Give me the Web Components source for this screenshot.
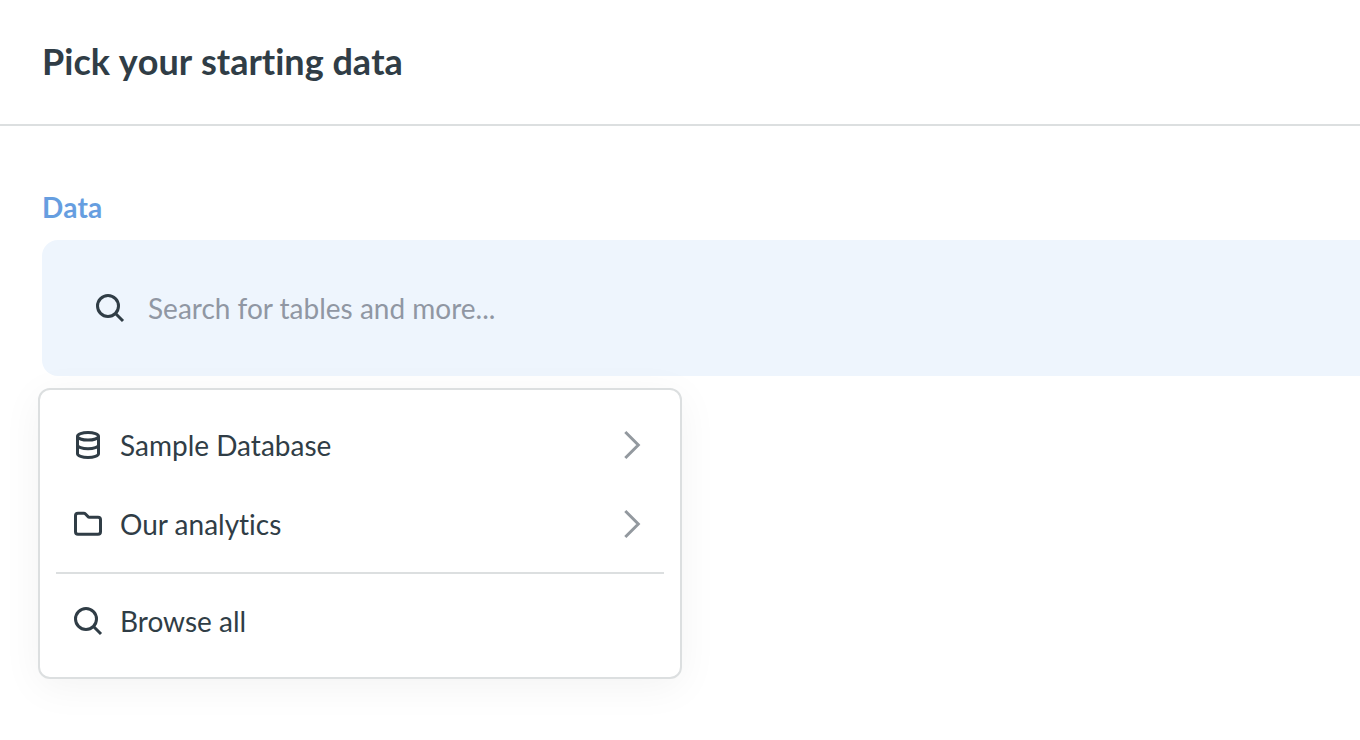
<!DOCTYPE html>
<html lang="en">
<head>
<meta charset="utf-8">
<title>Pick your starting data</title>
<style>
    body {
        margin: 0;
        background: #fff;
        color: #303d46;
        font-family: Lato, "Noto Sans", sans-serif;
        font-size: 28px;
        line-height: 32px;
        font-variant-ligatures: none;
    }
</style>
</head>
<body>
<page-header>Pick your starting data</page-header>
<main>
    <notebook-step label="Data">
        <data-search placeholder="Search for tables and more..."></data-search>
        <data-picker slot="popover">
            <picker-item icon="database" expandable>Sample Database</picker-item>
            <picker-item icon="folder" expandable>Our analytics</picker-item>
            <picker-item slot="footer" icon="search">Browse all</picker-item>
        </data-picker>
    </notebook-step>
</main>

<script>
const ICONS = {
    search: '<circle cx="14" cy="14" r="10.5"/><path d="M21.5 21.5 29 29"/>',
    database: '<ellipse cx="16" cy="7.3" rx="10.5" ry="3.8"/><path d="M5.5 7.3v17.4c0 2.1 4.7 3.8 10.5 3.8s10.5-1.7 10.5-3.8V7.3M5.5 16c0 2.1 4.7 3.8 10.5 3.8s10.5-1.7 10.5-3.8"/>',
    folder: '<path d="M6 5.3h5.8c.8 0 1.2.2 1.7.7l2.4 2.6c.4.5.9.7 1.6.7H26c1.6 0 2.5.9 2.5 2.5v11.9c0 1.6-.9 2.5-2.5 2.5H6c-1.6 0-2.5-.9-2.5-2.5V7.8c0-1.6.9-2.5 2.5-2.5z"/>',
    chevron: '<path d="M9.3 3 22.3 16 9.3 29"/>'
};

class AppIcon extends HTMLElement {
    constructor() {
        super();
        this.attachShadow({ mode: 'open' });
    }

    connectedCallback() {
        this.shadowRoot.innerHTML = `
            <style>
                :host {
                    display: block;
                    flex: none;
                    width: 32px;
                    height: 32px;
                }
                svg {
                    display: block;
                    fill: none;
                    stroke: currentColor;
                    stroke-width: 3;
                }
            </style>
            <svg width="32" height="32" viewBox="0 0 32 32" aria-hidden="true">${ICONS[this.getAttribute('name')]}</svg>
        `;
    }
}

class PageHeader extends HTMLElement {
    constructor() {
        super();
        this.attachShadow({ mode: 'open' });
    }

    connectedCallback() {
        this.shadowRoot.innerHTML = `
            <style>
                :host {
                    display: block;
                    padding: 40px 42px;
                    border-bottom: 2px solid #dcdfe0;
                }
                h1 {
                    margin: 0 0 2px;
                    font-size: 36px;
                    line-height: 42px;
                    font-weight: 700;
                    font-kerning: none;
                }
            </style>
            <h1><slot></slot></h1>
        `;
    }
}

class NotebookStep extends HTMLElement {
    constructor() {
        super();
        this.attachShadow({ mode: 'open' });
    }

    connectedCallback() {
        this.shadowRoot.innerHTML = `
            <style>
                :host {
                    display: block;
                    padding: 65px 0 60px 42px;
                }
                h2 {
                    margin: 0 0 17px;
                    color: #669ee0;
                    font-size: 28px;
                    line-height: 32px;
                    font-weight: 700;
                    font-kerning: none;
                }
                .cell {
                    padding: 52px;
                    border-radius: 16px 0 0 16px;
                    background: #eef5fd;
                }
                .popover {
                    margin: 12px 0 0 -4px;
                }
            </style>
            <h2>${this.getAttribute('label')}</h2>
            <div class="cell"><slot></slot></div>
            <div class="popover"><slot name="popover"></slot></div>
        `;
    }
}

class DataSearch extends HTMLElement {
    constructor() {
        super();
        this.attachShadow({ mode: 'open' });
    }

    connectedCallback() {
        const placeholder = this.getAttribute('placeholder');
        this.shadowRoot.innerHTML = `
            <style>
                :host {
                    display: block;
                }
                label {
                    display: flex;
                    gap: 22px;
                }
                input {
                    flex: 1;
                    min-width: 0;
                    height: 32px;
                    padding: 0;
                    border: 0;
                    outline: 0;
                    background: none;
                    color: inherit;
                    font: inherit;
                }
                input::placeholder {
                    color: #9097a3;
                    opacity: 1;
                }
            </style>
            <label>
                <app-icon name="search"></app-icon>
                <input type="text" placeholder="${placeholder}" aria-label="${placeholder}">
            </label>
        `;
    }
}

class DataPicker extends HTMLElement {
    constructor() {
        super();
        this.attachShadow({ mode: 'open' });
    }

    connectedCallback() {
        this.shadowRoot.innerHTML = `
            <style>
                :host {
                    display: block;
                    position: relative;
                    box-sizing: border-box;
                    width: 644px;
                    max-width: 100%;
                    padding: 16px;
                    border: 2px solid #dcdfe0;
                    border-radius: 12px;
                    background: #fff;
                    box-shadow: 0 8px 40px rgba(0, 0, 0, 0.05);
                }
                hr {
                    height: 2px;
                    margin: 8px 0;
                    border: 0;
                    background: #dcdfe0;
                }
            </style>
            <slot></slot>
            <hr>
            <slot name="footer"></slot>
        `;
    }
}

class PickerItem extends HTMLElement {
    constructor() {
        super();
        this.attachShadow({ mode: 'open' });
    }

    connectedCallback() {
        const chevron = this.hasAttribute('expandable') ? '<app-icon class="chevron" name="chevron"></app-icon>' : '';
        this.shadowRoot.innerHTML = `
            <style>
                :host {
                    display: block;
                }
                button {
                    display: flex;
                    gap: 16px;
                    width: 100%;
                    padding: 23px 16px 24px;
                    border: 0;
                    border-radius: 8px;
                    background: none;
                    color: inherit;
                    font: inherit;
                    text-align: left;
                    cursor: pointer;
                }
                .name {
                    flex: 1;
                }
                .chevron {
                    color: #93999f;
                }
            </style>
            <button type="button">
                <app-icon name="${this.getAttribute('icon')}"></app-icon>
                <span class="name"><slot></slot></span>
                ${chevron}
            </button>
        `;
    }
}

customElements.define('app-icon', AppIcon);
customElements.define('page-header', PageHeader);
customElements.define('notebook-step', NotebookStep);
customElements.define('data-search', DataSearch);
customElements.define('data-picker', DataPicker);
customElements.define('picker-item', PickerItem);
</script>
</body>
</html>
